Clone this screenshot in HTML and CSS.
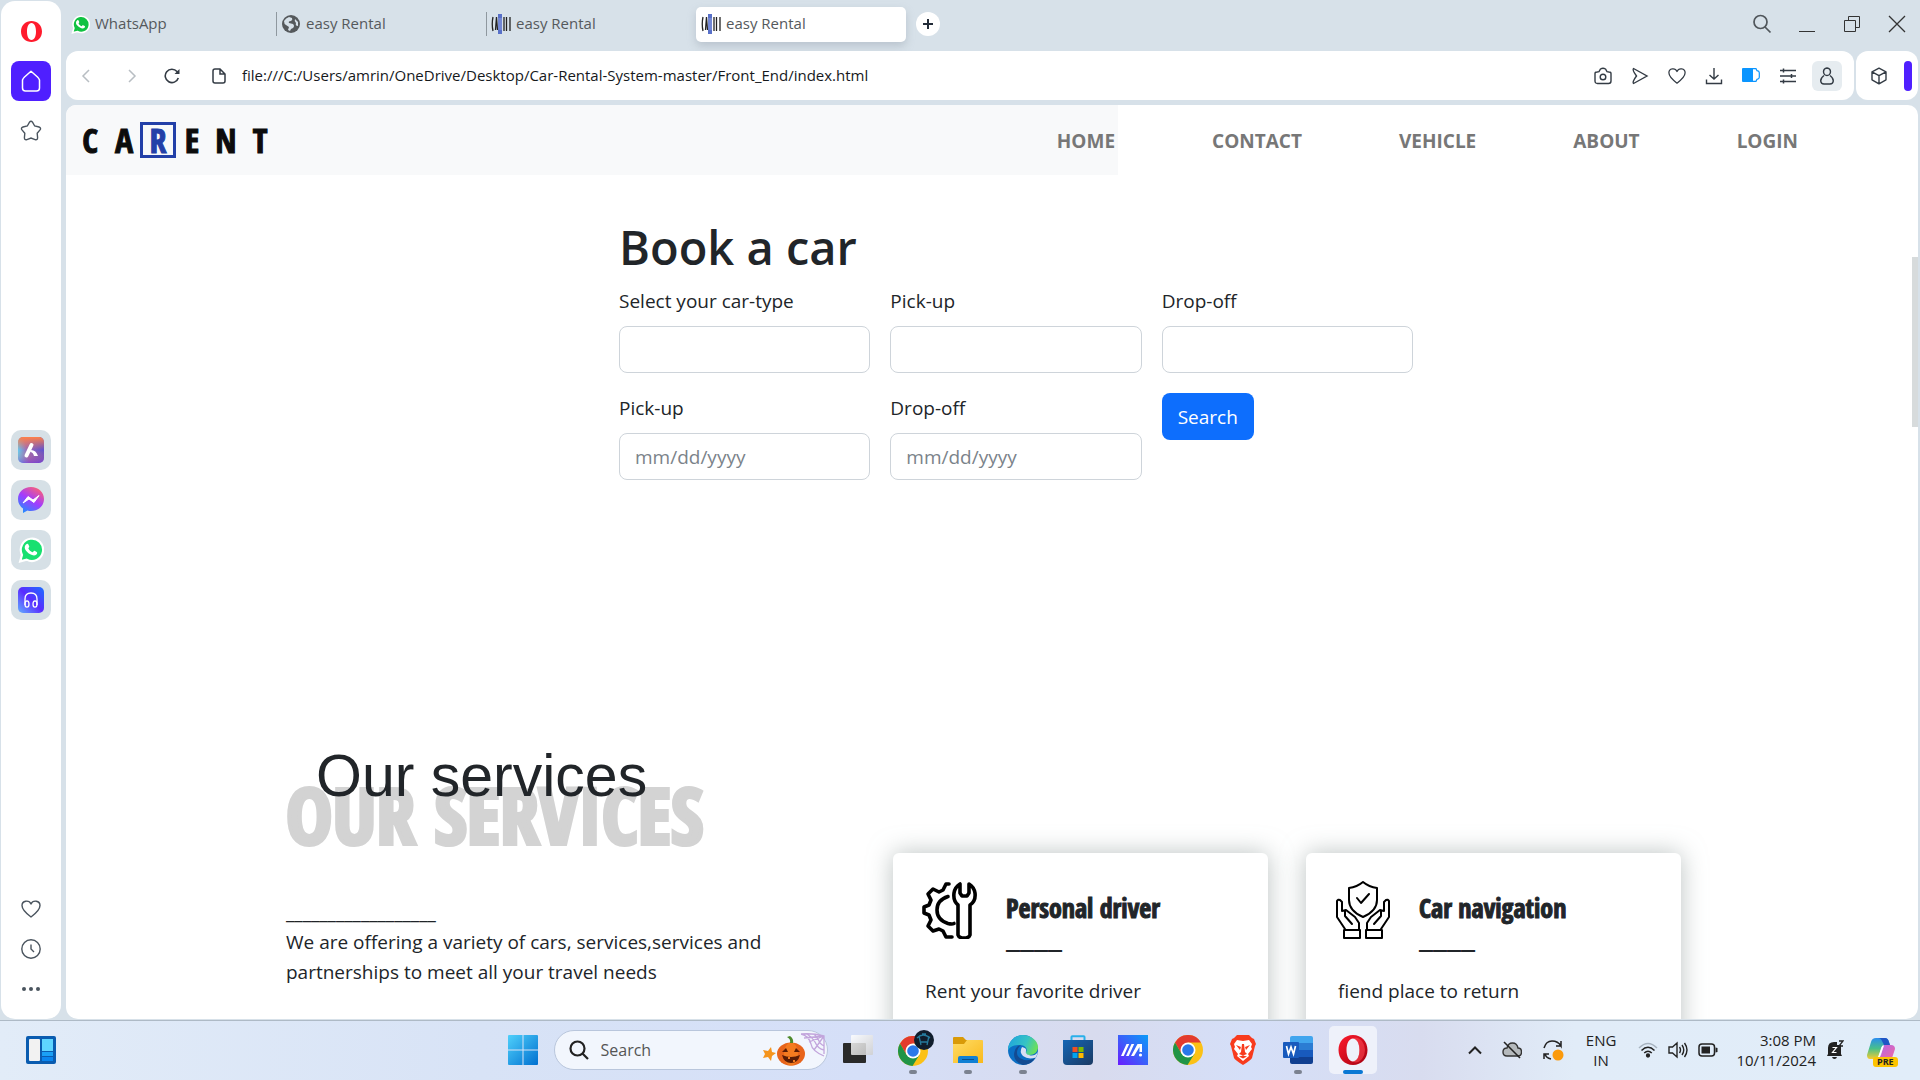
FILE: index.html
```html
<!DOCTYPE html>
<html lang="en">
<head>
<meta charset="utf-8">
<title>easy Rental</title>
<meta name="viewport" content="width=device-width, initial-scale=1">
<link rel="stylesheet" href="styles.css">
</head>
<body>
<svg class="defs" aria-hidden="true">
  <defs>
    <linearGradient id="gWin" x1="0" y1="0" x2="1" y2="1"><stop offset="0" stop-color="#4fd0fb"/><stop offset="1" stop-color="#0070d0"/></linearGradient>
    <linearGradient id="gAria" x1="0" y1="0.6" x2="1" y2="0.4"><stop offset="0" stop-color="#5fd0f5"/><stop offset="0.35" stop-color="#9a6ab8"/><stop offset="1" stop-color="#5a50d0"/></linearGradient>
    <linearGradient id="gAria2" x1="0" y1="0" x2="0" y2="1"><stop offset="0" stop-color="#ff8048"/><stop offset="0.5" stop-color="#ff8048" stop-opacity="0"/><stop offset="1" stop-color="#7a35d5" stop-opacity="0.6"/></linearGradient>
    <linearGradient id="gMsg" x1="0.2" y1="1" x2="0.8" y2="0"><stop offset="0" stop-color="#1c90ff"/><stop offset="0.5" stop-color="#a33bff"/><stop offset="1" stop-color="#ff6270"/></linearGradient>
    <linearGradient id="gHead" x1="0" y1="1" x2="1" y2="0"><stop offset="0" stop-color="#62b0ff"/><stop offset="0.5" stop-color="#5a2cff"/><stop offset="1" stop-color="#1a70ff"/></linearGradient>
    <linearGradient id="gFold" x1="0" y1="0" x2="1" y2="1"><stop offset="0" stop-color="#ffdc65"/><stop offset="1" stop-color="#f9b91c"/></linearGradient>
    <linearGradient id="gEdge" x1="0" y1="0.2" x2="1" y2="0.5"><stop offset="0" stop-color="#1fa5dd"/><stop offset="0.6" stop-color="#35c3c5"/><stop offset="1" stop-color="#6be05a"/></linearGradient>
    <linearGradient id="gStore" x1="0" y1="0" x2="1" y2="1"><stop offset="0" stop-color="#1466b5"/><stop offset="1" stop-color="#1b3a63"/></linearGradient>
    <linearGradient id="gA" x1="0" y1="1" x2="1" y2="0"><stop offset="0" stop-color="#6a1cff"/><stop offset="0.5" stop-color="#3a60fa"/><stop offset="1" stop-color="#0a9cf8"/></linearGradient>
    <linearGradient id="gOp" x1="0" y1="0" x2="1" y2="1"><stop offset="0" stop-color="#ff1b2d"/><stop offset="1" stop-color="#a3000f"/></linearGradient>
    <linearGradient id="gCo1" x1="0" y1="0" x2="0" y2="1"><stop offset="0" stop-color="#2a8df0"/><stop offset="0.5" stop-color="#48c08a"/><stop offset="1" stop-color="#f5cc30"/></linearGradient>
    <linearGradient id="gCo2" x1="0" y1="0" x2="1" y2="1"><stop offset="0" stop-color="#b065f0"/><stop offset="1" stop-color="#f56a98"/></linearGradient>
    <linearGradient id="gTv" x1="0" y1="0" x2="1" y2="1"><stop offset="0" stop-color="#ffffff"/><stop offset="1" stop-color="#cfcfcf"/></linearGradient>
  </defs>
  <symbol id="carent" viewBox="0 0 20 20"><path d="M7 0h4v20H7z" fill="#5870c8"/><path d="M8 4v12M10 4v12" stroke="#8fa0e0"/><path d="M2 3q-1.500 7 0 14M4.500 16l1-13 1 13M13 3v14M15.500 3v14M19 3v14" fill="none" stroke="#222" stroke-width="1.300"/></symbol>
  <symbol id="heart" viewBox="0 0 20 20"><path d="M10 18C4 13.500 1 10.500 1 6.500 1 1.500 8 .5 10 5c2-4.500 9-3.500 9 1.500 0 4-3 7-9 11.500z" fill="none" stroke="currentColor" stroke-width="1.400" stroke-linejoin="round"/></symbol>
  <symbol id="chrome" viewBox="0 0 30 30"><circle cx="15" cy="15" r="15" fill="#fbc116"/><path d="M2 7.500A15 15 0 0 1 28 7.500H15L8.500 18.700z" fill="#e33b2e"/><path d="M2 7.500A15 15 0 0 0 14.500 30L21.500 18.700 8.500 18.700z" fill="#209447"/><circle cx="15" cy="15" r="7.500" fill="#fff"/><circle cx="15" cy="15" r="5.800" fill="#2a78ea"/></symbol>
  <symbol id="phone" viewBox="0 0 24 24"><path d="M2 22.500l1.700-6A10.300 10.300 0 1 1 8 20.900z" stroke="#fff" stroke-width="2"/><path d="M8 6.500c.6-.5 1.300-.3 1.600.4l.8 1.900c.2.600-.9 1.400-.8 1.900.8 1.600 2 2.700 3.700 3.400.7.200 1.300-1.600 2-1.300l2 1c.7.400.4 1.700-.3 2.400-2.200 2-6.500 0-8.700-2.500-2.400-2.600-3-5.300-.3-7.200z" fill="#fff"/></symbol>
</svg>

<div class="desktop">
  <div class="browser">
    <aside class="sidebar">
      <svg class="side-logo" width="21" height="21" viewBox="0 0 21 21"><path fill="#ff1b2d" fill-rule="evenodd" d="M10.500 0C16 0 21 4 21 10.500S16 21 10.500 21 0 17 0 10.500 5 0 10.500 0zm0 2C7.500 2 6 6 6 10.500S7.500 19 10.500 19 15 15 15 10.500 13.500 2 10.500 2z"/></svg>
      <button class="side-home" type="button" aria-label="Home"><svg width="20" height="22" viewBox="0 0 20 22"><path d="M1.500 10Q2 8.500 3.500 7L10 1.200 16.500 7q1.500 1.500 2 3v8q0 3-3 3h-11q-3 0-3-3z" fill="none" stroke="#fff" stroke-width="1.500" stroke-linejoin="round"/></svg></button>
      <button class="side-plain" type="button" aria-label="Speed dial"><svg width="22" height="22" viewBox="0 0 22 22"><path d="M9.500 2.200Q11 .2 12.500 2.200L14.700 6l4.300 1q2.500.9 1 2.900L17.200 13.200l.4 4.600q-.1 2.600-2.500 1.800L11 18l-4.100 1.600q-2.400.8-2.500-1.800l.4-4.600L2 9.900Q.5 7.900 3 7l4.300-1z" fill="none" stroke="#4a545e" stroke-width="1.400"/></svg></button>
      <div class="side-apps">
        <button type="button" aria-label="Aria"><svg width="26" height="26" viewBox="0 0 26 26"><rect width="26" height="26" rx="5" fill="url(#gAria)"/><rect width="26" height="26" rx="5" fill="url(#gAria2)"/><path d="M8.500 18.500L13.500 8" stroke="#fff" stroke-width="4" stroke-linecap="round"/><path d="M13 13q5 0 7 6h-4q-1-4-4-4z" fill="#fff"/></svg></button>
        <button type="button" aria-label="Messenger"><svg width="26" height="26" viewBox="0 0 26 26"><path d="M13 0c7.500 0 13 5.300 13 12s-5.500 12-13 12q-2 0-3.500-.5L5 26v-4.500Q0 18 0 12C0 5.300 5.500 0 13 0z" fill="url(#gMsg)"/><path d="M5 16l5-6.500 5 3.500 6-4.500-5 7-5-3.500z" fill="#fff" stroke="#fff" stroke-linejoin="round"/></svg></button>
        <button type="button" aria-label="WhatsApp"><svg width="26" height="26" fill="#18e070"><use href="#phone"/></svg></button>
        <button type="button" aria-label="Player"><svg width="26" height="26" viewBox="0 0 26 26"><rect width="26" height="26" rx="5" fill="url(#gHead)"/><path d="M7 18v-6q0-6 6-6t6 6v6" fill="none" stroke="#fff" stroke-width="1.300"/><ellipse cx="9" cy="17" rx="2" ry="3.200" fill="none" stroke="#fff" stroke-width="1.300"/><ellipse cx="17" cy="17" rx="2" ry="3.200" fill="none" stroke="#fff" stroke-width="1.300"/></svg></button>
      </div>
      <div class="side-foot">
        <svg width="20" height="20"><use href="#heart"/></svg>
        <svg width="20" height="20" viewBox="0 0 20 20" fill="none" stroke="currentColor" stroke-width="1.400"><circle cx="10" cy="10" r="9.200"/><path d="M10 5.500V10l3 3"/></svg>
        <svg width="20" height="20" viewBox="0 0 20 20" fill="currentColor"><circle cx="3" cy="10" r="2"/><circle cx="10" cy="10" r="2"/><circle cx="17" cy="10" r="2"/></svg>
      </div>
    </aside>

    <div class="window">
      <div class="tabs">
        <div class="tab"><svg width="19" height="19" fill="#10c242"><use href="#phone"/></svg><span>WhatsApp</span></div>
        <div class="tab tab-sep"><svg width="20" height="18" viewBox="0 0 20 18"><circle cx="10" cy="9" r="9" fill="#55595c"/><path d="M3 6q2-3 5-4l3 1q1 2-1 3-3 0-2 2l4 1q2 2 0 4l-2 1-1 2-2-1 1-3-3-2q-2-1-2-4zM14 4l3 3v4q-3 0-2-3-2-2-1-4z" fill="#d7e1e9"/></svg><span>easy Rental</span></div>
        <div class="tab tab-sep"><svg width="20" height="20"><use href="#carent"/></svg><span>easy Rental</span></div>
        <div class="tab tab-active"><svg width="20" height="20"><use href="#carent"/></svg><span>easy Rental</span></div>
        <button class="tab-new" type="button" aria-label="New tab"><svg width="10" height="10" viewBox="0 0 10 10"><path d="M5 0v10M0 5h10" stroke="#222b38" stroke-width="2"/></svg></button>
        <div class="win-controls">
          <svg width="20" height="20" viewBox="0 0 20 20" fill="none" stroke="#50565b" stroke-width="1.700"><circle cx="8.500" cy="8" r="6.500"/><path d="M13 13l5.500 5.500"/></svg>
          <svg width="20" height="20" viewBox="0 0 20 20" fill="none" stroke="#333"><path d="M2 17.500h16"/></svg>
          <svg width="20" height="20" viewBox="0 0 20 20" fill="none" stroke="#333"><path d="M2.500 6.500h11v11h-11zM6.500 6V2.500h11v11H14"/></svg>
          <svg width="20" height="20" viewBox="0 0 20 20" fill="none" stroke="#333" stroke-width="1.300"><path d="M2 2l16 16M18 2L2 18"/></svg>
        </div>
      </div>

      <div class="toolbar">
        <div class="address">
          <svg width="16" height="16" viewBox="0 0 16 16"><path d="M11 2L5 8l6 6" fill="none" stroke="#b8bec3" stroke-width="1.500"/></svg>
          <svg width="16" height="16" viewBox="0 0 16 16"><path d="M8 2l6 6-6 6" fill="none" stroke="#b8bec3" stroke-width="1.500"/></svg>
          <svg width="16" height="16" viewBox="0 0 16 16"><path d="M14.300 10A6.700 6.700 0 1 1 13 3.500l1.500 1.500" fill="none" stroke="#333b44" stroke-width="1.600"/><path d="M15.500 1v5h-5z" fill="#333b44"/></svg>
          <svg class="doc" width="14" height="16" viewBox="0 0 14 16"><path d="M1 3q0-2 2-2h5l5 5v7q0 2-2 2H3q-2 0-2-2zM8 1v5h5" fill="none" stroke="#333b44" stroke-width="1.500"/></svg>
          <input class="url" type="text" aria-label="Address" value="file:///C:/Users/amrin/OneDrive/Desktop/Car-Rental-System-master/Front_End/index.html">
          <div class="tools">
            <svg width="18" height="18" viewBox="0 0 18 18" fill="none" stroke="currentColor" stroke-width="1.400"><path d="M1 6.500Q1 5 3 5l2-.3L6.500 2Q9 .5 11.500 2L13 4.700l2 .3q2 0 2 1.500V14q0 2.500-2.500 2.500h-11Q1 16.500 1 14z"/><circle cx="9" cy="10" r="2.800"/></svg>
            <svg width="18" height="18" viewBox="0 0 18 18" fill="none" stroke="currentColor" stroke-width="1.400"><path d="M2.500 1.500L16 9 2.500 16.500Q1 15 5.500 9 1 3 2.500 1.500z"/></svg>
            <svg width="18" height="18" viewBox="0 0 20 20"><use href="#heart"/></svg>
            <svg width="18" height="18" viewBox="0 0 18 18" fill="none" stroke="currentColor" stroke-width="1.400"><path d="M9 1v11M4.500 8L9 12l4.500-4M1.500 12.500v4h15v-4"/></svg>
            <svg width="18" height="18" viewBox="0 0 18 18"><path d="M1 1h10v14H1q-1 0-1-1V2q0-1 1-1z" fill="#0a95ff"/><path d="M11 1.700h3l1 2q2.300.3 2.300 2v4.600q0 1.700-2.300 2l-1 2h-3" fill="none" stroke="#0a95ff" stroke-width="1.200"/></svg>
            <svg width="18" height="18" viewBox="0 0 18 18" fill="none" stroke="currentColor" stroke-width="1.500"><path d="M1 3.500h16M1 9h16M1 14.500h16M4.500 1.500v4M12.500 7v4M4.500 12.500v4"/></svg>
          </div>
          <button class="profile" type="button" aria-label="Profile"><svg width="16" height="18" viewBox="0 0 16 18" fill="none" stroke="#333b44" stroke-width="1.400"><path d="M8 1Q11.500 1.500 11.500 5 11 8.500 8 8.500T4.500 5Q4.500 1.500 8 1zM5 8.500Q1.500 11 1.700 14q.3 3 3.300 3h6q3 0 3.300-3 .2-3-3.300-5.500"/></svg></button>
        </div>
        <div class="extras">
          <svg width="18" height="18" viewBox="0 0 18 18" fill="none" stroke="#333b44" stroke-width="1.400" stroke-linejoin="round"><path d="M9 1.200l7 3.600v8L9 16.800l-7-4v-8zM2 4.800l7 3.800 7-3.800M9 8.600v8.200"/></svg>
          <span class="extras-bar"></span>
        </div>
      </div>

      <main class="page">
        <header class="nav">
          <a class="brand" href="#" aria-label="Carent"><span>C</span><span>A</span><span class="brand-r">R</span><span>E</span><span>N</span><span>T</span></a>
          <nav class="links"><a href="#">HOME</a><a href="#">CONTACT</a><a href="#">VEHICLE</a><a href="#">ABOUT</a><a href="#">LOGIN</a></nav>
        </header>

        <section class="book">
          <h1>Book a car</h1>
          <form class="book-form">
            <div class="field"><label for="type">Select your car-type</label><input id="type" type="text"></div>
            <div class="field"><label for="from">Pick-up</label><input id="from" type="text"></div>
            <div class="field"><label for="to">Drop-off</label><input id="to" type="text"></div>
            <div class="field"><label for="start">Pick-up</label><input id="start" type="text" placeholder="mm/dd/yyyy"></div>
            <div class="field"><label for="end">Drop-off</label><input id="end" type="text" placeholder="mm/dd/yyyy"></div>
            <button class="search-btn" type="button">Search</button>
          </form>
        </section>

        <section class="services">
          <div class="intro">
            <h2>Our services</h2>
            <p class="shadow-title">OUR SERVICES</p>
            <p class="intro-text">__________________<br>We are offering a variety of cars, services,services and partnerships to meet all your travel needs</p>
          </div>
          <div class="cards">
            <article class="card">
              <svg width="56" height="58" viewBox="0 0 56 58" fill="none" stroke="#000" stroke-width="3.600" stroke-linejoin="round" stroke-linecap="round"><path d="M27 3h-3l-3 6-4 2-6-3-5 5 3 6-2 5-5 2v6l5 2 2 5-3 6 5 5 6-2 4 2 3 6h6"/><path d="M26 15.500Q15 19 15 29t11 13.500q4 1 6 0"/><path d="M36 54V24Q31 20 32 12q1-6 6-9v9l2 3h5l2-3V3q5 3 6 9 1 8-5 12v30q-1 3-6 3t-6-3z"/></svg>
              <div class="card-head"><h3>Personal driver</h3><span>____</span></div>
              <p>Rent your favorite driver</p>
            </article>
            <article class="card">
              <svg width="56" height="58" viewBox="0 0 56 58" fill="none" stroke="#000" stroke-width="2" stroke-linejoin="round" stroke-linecap="round"><path d="M28 1q6 5 14 6v12q0 11-14 17-14-6-14-17V7q8-1 14-6zM22 17l4 5 8-9"/><path d="M10 48L2 36V20q1-2 3-1l2 2v9l4-1 9 7 4 6v6M10 30v5l7 8M9 49h16v8H9z"/><path d="M46 48l8-12V20q-1-2-3-1l-2 2v9l-4-1-9 7-4 6v6M46 30v5l-7 8M31 49h16v8H31z"/></svg>
              <div class="card-head"><h3>Car navigation</h3><span>____</span></div>
              <p>fiend place to return</p>
            </article>
          </div>
        </section>
        <span class="scroll-thumb"></span>
      </main>
    </div>
  </div>

  <footer class="taskbar">
    <div class="task-left">
      <svg width="30" height="28" viewBox="0 0 30 28"><rect width="30" height="28" rx="2" fill="#0a5cb0"/><rect x="3" y="3" width="11" height="22" rx="1" fill="#f2f2f2"/><path d="M16 3h11v12H16z" fill="#5fd5ff"/><path d="M16 16h11v4H16z" fill="#1aa0f5"/><path d="M16 21h11v4H16z" fill="#0a85ee"/></svg>
    </div>
    <div class="task-mid">
      <button class="start" type="button" aria-label="Start"><svg width="30" height="30" viewBox="0 0 30 30" fill="url(#gWin)"><path d="M0 1q0-1 1-1h13.500v14.500H0zM15.500 0H29q1 0 1 1v13.500H15.500zM0 15.500h14.500V30H1q-1 0-1-1zM15.500 15.500H30V29q0 1-1 1H15.500z"/></svg></button>
      <label class="task-search">
        <svg width="20" height="20" viewBox="0 0 20 20" fill="none" stroke="#222" stroke-width="2.200"><circle cx="8.500" cy="8.500" r="7"/><path d="M13.500 13.500L19 19"/></svg>
        <input type="text" placeholder="Search" aria-label="Search">
        <svg width="64" height="36" viewBox="0 0 64 36"><path d="M2 18l5 1 3-4 1 5 4 1-4 3-1 5-3-4-5 1 2-4z" fill="#f5941d"/><ellipse cx="30" cy="22" rx="14" ry="11.500" fill="#e8641b"/><ellipse cx="30" cy="22" rx="7" ry="11.500" fill="#f47b20"/><path d="M29 11q1-4-3-6l3-1q4 3 3 7z" fill="#4d8a2a"/><path d="M21 20l4-4 2 4zM33 20l2-4 4 4zM21 23q9 4 18 0-2 8-9 8t-9-8z" fill="#5b1c05"/><path d="M27 25h2v2h-2zM32 28h2v2h-2z" fill="#f47b20"/><path d="M40 2q12-1 23 2v18M40 2q8 2 10 10 1 7 13 12M63 4L43 6M63 4L48 10M63 4L53 18M46 2q5 3 8 8 3 7 9 8M53 2q4 4 6 9 2 2 4 3" fill="none" stroke="#c2a5dc" stroke-width="1.300"/></svg>
      </label>
      <div class="apps">
        <button type="button" aria-label="Task view"><svg width="30" height="30" viewBox="0 0 30 30"><rect y="8" width="23" height="20" rx="1" fill="#2a2a2a"/><rect x="8" y="0" width="22" height="20" rx="1" fill="url(#gTv)" opacity=".85"/></svg></button>
        <button class="open" type="button" aria-label="Chrome profile"><svg width="42" height="40" viewBox="0 0 42 40"><svg x="6" y="6" width="30" height="30"><use href="#chrome"/></svg><circle cx="32" cy="10" r="10" fill="#101d2c"/><path d="M25 8q6-6 13 0M27 6l2 9M37 6l-2 9M29 12h6M30 4h4" fill="none" stroke="#257a9c" stroke-width="1.300"/></svg></button>
        <button class="open" type="button" aria-label="File Explorer"><svg width="30" height="28" viewBox="0 0 30 28"><path d="M0 2q0-1 1-1h9l3 3h15v6H0z" fill="#d99a08"/><path d="M0 8h11l3-4h15q1 0 1 1v22H0z" fill="url(#gFold)"/><path d="M5 27v-5q0-2 2-2h16q2 0 2 2v5z" fill="#1180d4"/><path d="M9 23.500h12" stroke="#0a4f8c"/></svg></button>
        <button class="open" type="button" aria-label="Edge"><svg width="30" height="30" viewBox="0 0 30 30"><circle cx="15" cy="15" r="15" fill="#0b6fc4"/><path d="M0 14C1 5 8 0 15 0s15 5 15 12c0 5-4 8-8 8-3 0-5-1-4-3 2-2 0-7-6-7-6 0-11 2-12 6z" fill="url(#gEdge)"/><path d="M9 18q0-5 4-8-6 1-7 9 0 8 9 11 8 0 12-7-8 4-13 1-5-2-5-6z" fill="#134b92"/><path d="M14 12q-3 5 1 9 5 4 13 1.500L30 17q-4 5-9 3-4-1-3-4 1-3-4-4z" fill="#d8dff3"/></svg></button>
        <button type="button" aria-label="Store"><svg width="30" height="30" viewBox="0 0 30 30"><path d="M8.500 6V2q0-.8.800-.8h11.400q.8 0 .8.800v4" fill="none" stroke="#28b0ea" stroke-width="2"/><path d="M0 5h30v21q0 4-4 4H4q-4 0-4-4z" fill="url(#gStore)"/><path d="M9.500 12h5v5h-5z" fill="#f25022"/><path d="M15.500 12h5v5h-5z" fill="#7fba00"/><path d="M9.500 18h5v5h-5z" fill="#00a4ef"/><path d="M15.500 18h5v5h-5z" fill="#ffb900"/></svg></button>
        <button type="button" aria-label="MyASUS"><svg width="30" height="30" viewBox="0 0 30 30"><path d="M0 0h30v30H0z" fill="url(#gA)"/><path d="M3 21L8.500 9h2.700L5.700 21zM8 21l5.500-12h2.700L10.700 21zM13 21l6.500-12H24v8h-2.500v-5L16 21z" fill="#fff"/><circle cx="22.500" cy="20" r="1.600" fill="#fff"/></svg></button>
        <button type="button" aria-label="Chrome"><svg width="30" height="30"><use href="#chrome"/></svg></button>
        <button type="button" aria-label="Brave"><svg width="26" height="30" viewBox="0 0 26 30"><path d="M7 0h12l3 3 2 1 2 5-1 2-3 12q-1 2-9 7-8-5-9-7L1 11 0 9l2-5 2-1z" fill="#f83b1d"/><path d="M4 9l3-4 6 1 6-1 3 4-1 3 1 2-4 5 1 2-6 5-6-5 1-2-4-5 1-2z" fill="#fff"/><path d="M6 10l5 2-1 3zM20 10l-5 2 1 3zM12 9h2l1 8 2 2-4 1.500L9 19l2-2zM9 21.500l4-1 4 1-4 2z" fill="#f83b1d"/></svg></button>
        <button class="open" type="button" aria-label="Word"><svg width="30" height="28" viewBox="0 0 30 28"><path d="M7 2q0-2 2-2h19q2 0 2 2v5H7z" fill="#41a5ee"/><path d="M7 7h23v7H7z" fill="#2b7cd3"/><path d="M7 14h23v7H7z" fill="#185abd"/><path d="M7 21h23v5q0 2-2 2H9q-2 0-2-2z" fill="#103f91"/><rect y="6" width="16" height="16" rx="1" fill="#185abd"/><path d="M3.500 10l2 8L8 11l2.500 7 2-8" fill="none" stroke="#fff" stroke-width="1.700"/></svg></button>
        <button class="open current" type="button" aria-label="Opera"><svg width="30" height="30" viewBox="0 0 30 30"><path fill="url(#gOp)" fill-rule="evenodd" d="M15 0c8.500 0 14.500 6.500 14.500 15S23.500 30 15 30 .5 23.500.5 15 6.500 0 15 0zm0 3.500C11 3.500 8.500 8.500 8.500 15S11 26.500 15 26.500 21.500 21.500 21.500 15 19 3.500 15 3.500z"/><path d="M15 3.500q4-3 9 2.500 3 4 3 9t-3 9q-5 5.500-9 2.500 6-1 6.500-11.500Q21 4.500 15 3.500z" fill="#ff4a55" opacity=".55"/></svg></button>
      </div>
    </div>
    <div class="tray">
      <svg width="14" height="10" viewBox="0 0 14 10"><path d="M1 8.500l6-6 6 6" fill="none" stroke="#222" stroke-width="2"/></svg>
      <svg width="20" height="18" viewBox="0 0 20 18"><path d="M5 15q-4 0-4-4t4-4q1-5 5.500-5T16 7q3.500 0 3.500 4T16 15z" fill="#b5b9bc" stroke="#333" stroke-width="1.400"/><path d="M2 1l16 16" stroke="#222" stroke-width="1.600"/></svg>
      <svg width="22" height="22" viewBox="0 0 22 22"><path d="M2 9Q4 2 10 2t9 5V2M19 7h-5M9 20q-5-1-6-5M2 20v-5h5" fill="none" stroke="#222" stroke-width="1.500"/><circle cx="16" cy="16" r="5.500" fill="#fb9a0c"/></svg>
      <div class="lang">ENG<br>IN</div>
      <div class="status">
        <svg width="20" height="16" viewBox="0 0 20 16" fill="none" stroke="#222" stroke-width="1.500"><path d="M1 6q9-9 18 0" stroke="#a8b4c0"/><path d="M3.500 8.500q6.500-6.500 13 0M6.200 11q3.800-3.500 7.600 0"/><circle cx="10" cy="13.500" r="1.400" fill="#222"/></svg>
        <svg width="20" height="18" viewBox="0 0 20 18" fill="none" stroke="#222" stroke-width="1.400"><path d="M1 6h3.500L9 2v14l-4.500-4H1zM11.500 6q2 3 0 6M14 4q3.500 5 0 10M16.500 2q5 7 0 14"/></svg>
        <svg width="20" height="14" viewBox="0 0 20 14"><rect x="1" y="1" width="15.500" height="12" rx="3" fill="none" stroke="#222" stroke-width="1.500"/><path d="M3.500 3.500h8.500v7H3.500zM17.500 4.500l2 .5v4l-2 .5z" fill="#222"/></svg>
      </div>
      <time class="clock">3:08 PM<br>10/11/2024</time>
      <svg width="18" height="20" viewBox="0 0 18 20"><path d="M2 14V8q0-6 6-6h3v3h4v9l1 2H1zM6 17h5q-.5 2-2.500 2T6 17z" fill="#222"/><path d="M13 1h4l-4 5h4" fill="none" stroke="#222" stroke-width="1.300"/><path d="M6.500 7.500h4l-4 5h4" fill="none" stroke="#fff" stroke-width="1.200"/></svg>
      <div class="copilot"><svg width="28" height="24" viewBox="0 0 28 24"><path d="M9 0h9q3 0 4 4l1 3h-6q-2 0-3 3l-2 8q-1 3-4 3H3q-3 0-3-4L4 4q1-4 5-4z" fill="url(#gCo1)"/><path d="M14 0h4q3 0 4 4l1 3h-6l-2-4q-1-3-4-3z" fill="#1f55c5"/><path d="M17 7h7q4 0 4 4l-3 9q-1 4-4 4h-8q-4 0-4-4h2q2 0 3-3z" fill="url(#gCo2)"/><path d="M16 8L11 21" stroke="#fff" stroke-width="1.500"/></svg><span>PRE</span></div>
    </div>
  </footer>
</div>
</body>
</html>
```
FILE: styles.css
```css
:root {
  --chrome: #d7e1e9;
  --ink: #212529;
  --ui: "Open Sans", "Noto Sans", sans-serif;
  --narrow: "Impact", "Open Sans Condensed", "Liberation Sans Narrow", "DejaVu Sans Condensed", sans-serif;
}

* { box-sizing: border-box; }

body {
  margin: 0;
  font-family: "Noto Sans", sans-serif;
  color: var(--ink);
}

h1, h2, h3, p { margin: 0; }
a { color: inherit; text-decoration: none; }
button { padding: 0; border: 0; background: none; font: inherit; }
input { border: 0; outline: 0; font: inherit; color: inherit; background: none; min-width: 0; width: 100%; }
svg { display: block; flex: none; }
.defs { position: absolute; width: 0; height: 0; }

.desktop {
  display: flex;
  flex-direction: column;
  height: 100vh;
  overflow: hidden;
  background: var(--chrome);
}

.browser { flex: 1; display: flex; gap: 5px; min-height: 0; padding: 1px 2px 1px 1px; }

/* Opera sidebar */
.sidebar {
  width: 60px;
  flex: none;
  display: flex;
  flex-direction: column;
  align-items: center;
  padding-top: 20px;
  background: #fff;
  border-radius: 14px;
  color: #4a545e;
}
.side-home, .side-plain, .side-apps button { display: grid; place-items: center; width: 40px; height: 40px; }
.side-home { margin-top: 19px; background: #4f1fff; border-radius: 8px; }
.side-plain { margin-top: 10px; }
.side-apps { display: flex; flex-direction: column; gap: 10px; margin-top: 279px; }
.side-apps button { background: #d6e0e6; border-radius: 10px; }
.side-foot { display: flex; flex-direction: column; gap: 20px; margin-top: auto; padding-bottom: 20px; }

.window { flex: 1; display: flex; flex-direction: column; min-width: 0; }

/* Tab strip */
.tabs { display: flex; align-items: center; height: 50px; padding: 0 11px 4px 0; font: 15px/20px var(--ui); color: #55595c; }
.tab { display: flex; align-items: center; gap: 5px; width: 210px; height: 35px; padding: 0 5px; }
.tab span { padding-bottom: 2px; }
.tab-sep { background: linear-gradient(#8f989f, #8f989f) 0 50% / 1px 24px no-repeat; }
.tab-active { background: #fff; border-radius: 5px; box-shadow: 0 4px 8px #8e99a466; }
.tab-new { display: grid; place-items: center; width: 24px; height: 24px; margin-left: 10px; border-radius: 50%; background: #fff; }
.win-controls { display: flex; gap: 25px; margin-left: auto; }

/* Address row */
.toolbar { display: flex; gap: 2px; height: 49px; }
.address, .extras { display: flex; align-items: center; background: #fff; border-radius: 12px; }
.address { flex: 1; gap: 27px; padding: 0 12px 0 12px; min-width: 0; color: #333b44; }
.doc { margin-left: 5px; }
.url { flex: 1; margin-left: -11px; padding: 0 0 2px; font: 15px/20px var(--ui); color: #16191c; }
.tools { display: flex; gap: 19px; }
.profile { display: grid; place-items: center; width: 30px; height: 30px; margin-left: -12px; border-radius: 6px; background: #e6ecf0; }
.extras { gap: 16px; width: 62px; padding-left: 14px; }
.extras-bar { width: 8px; height: 30px; border-radius: 4px; background: #4f1fff; }

/* Web page */
.page {
  position: relative;
  flex: 1;
  min-height: 0;
  margin-top: 5px;
  overflow: hidden;
  background: #fff;
  border-radius: 10px 10px 12px 12px;
}
.nav {
  display: flex;
  align-items: center;
  justify-content: space-between;
  height: 70px;
  padding: 0 120px 0 7px;
  background: linear-gradient(#f8f9fa, #f8f9fa) 0 0 / 1052px 100% no-repeat;
}
.brand {
  display: grid;
  grid-template-columns: repeat(6, 34px);
  justify-items: center;
  align-items: center;
  padding-bottom: 1px;
  font: 700 34px/34px "Open Sans Condensed", "Liberation Sans Narrow", "Open Sans", sans-serif;
  color: #0c0c0c;
  -webkit-text-stroke: 1px currentColor;
}
.brand-r { width: 36px; height: 36px; border: 3px solid #2340a8; color: #2340a8; line-height: 30px; text-align: center; }
.links { display: flex; gap: 97px; padding-top: 2px; font: 700 19px/30px var(--ui); color: #777; }

.book { width: 794px; margin: 42px 0 0 553px; }
.book h1 { font: 600 47px/60px var(--ui); }
.book-form { display: grid; grid-template-columns: repeat(3, minmax(0, 1fr)); gap: 20px; margin-top: 9px; font: 19px/30px var(--ui); }
.field { display: flex; flex-direction: column; gap: 10px; }
.field input { height: 47px; padding: 0 15px; border: 1px solid #ced4da; border-radius: 8px; }
.field input::placeholder { color: #7b838a; opacity: 1; }
.search-btn { justify-self: start; height: 47px; padding: 0 16px; border-radius: 8px; background: #0d6efd; color: #fff; }

.services { display: flex; justify-content: space-between; align-items: flex-start; margin-top: 260px; padding: 0 237px 0 220px; }
.intro { width: 500px; }
.intro h2 { position: relative; z-index: 1; margin-left: 30px; font: 400 59px/72px "Liberation Sans", Arial, sans-serif; }
.shadow-title { margin-top: -43px; font: 700 78px/90px var(--narrow); color: #d3d3d3; white-space: nowrap; -webkit-text-stroke: 4px #d3d3d3; }
.intro-text { margin-top: 38px; font: 19px/30px var(--ui); }
.cards { display: flex; gap: 38px; margin-top: 113px; }
.card {
  display: grid;
  grid-template-columns: 56px 1fr;
  column-gap: 28px;
  width: 375px;
  min-height: 260px;
  align-content: start;
  padding: 28px 29px;
  background: #fff;
  border-radius: 6px;
  box-shadow: 0 0 24px #8d9a9899;
}
.card h3 { padding-top: 12px; font: 700 26px/30px var(--narrow); -webkit-text-stroke: 1px currentColor; }
.card-head span { display: block; margin-bottom: 7px; font: 32px/24px var(--ui); }
.card p { grid-column: 1 / -1; margin: 22px 0 0 3px; font: 500 19px/30px var(--ui); }
.scroll-thumb { position: absolute; top: 152px; right: 0; width: 6px; height: 170px; background: #d7dbdc; }

/* Windows taskbar */
.taskbar {
  display: grid;
  grid-template-columns: 1fr auto 1fr;
  align-items: center;
  height: 60px;
  padding-bottom: 1px;
  border-top: 1px solid #aebac6;
  background: linear-gradient(90deg, #e2ecf8 0, #d8e3f6 25%, #d5dff8 45%, #d8dbee 57%, #d5dff8 65%, #d8dcef 74%, #e1ecf8 82%, #e1edf9);
}
.task-left { padding-left: 26px; }
.task-mid { display: flex; align-items: center; padding-right: 36px; }
.task-search { display: flex; align-items: center; width: 274px; height: 40px; margin: 0 6px 0 16px; padding: 0 2px 0 14px; border: 1px solid #b9c6dc; border-radius: 20px; background: #f2f6fd; }
.task-search input { flex: 1; margin-left: 12px; padding: 0; font: 16px/24px var(--ui); }
.task-search input::placeholder { color: #555; opacity: 1; }
.apps { display: flex; gap: 7px; }
.apps button { position: relative; display: grid; place-items: center; width: 48px; height: 48px; border-radius: 5px; }
.open::after { content: ""; position: absolute; left: 20px; bottom: 0; width: 8px; height: 4px; border-radius: 2px; background: #7b8290; }
.current { background: #eef1fa; }
.apps .current::after { left: 14px; width: 20px; background: #0a78d4; }
.tray { display: flex; align-items: center; justify-content: flex-end; padding-right: 25px; font: 15px/20px var(--ui); color: #222; }
.tray > svg { margin-left: 20px; }
.lang { margin-left: 22px; text-align: center; }
.status { display: flex; align-items: center; gap: 10px; margin-left: 22px; }
.clock { margin-left: 18px; text-align: right; }
.tray > .clock + svg { margin-left: 10px; }
.copilot { position: relative; margin-left: 23px; }
.copilot span { position: absolute; left: 6px; bottom: -5px; padding: 0 4px; border-radius: 3px; background: #fdc400; font: 700 9px/10px var(--ui); }
```
